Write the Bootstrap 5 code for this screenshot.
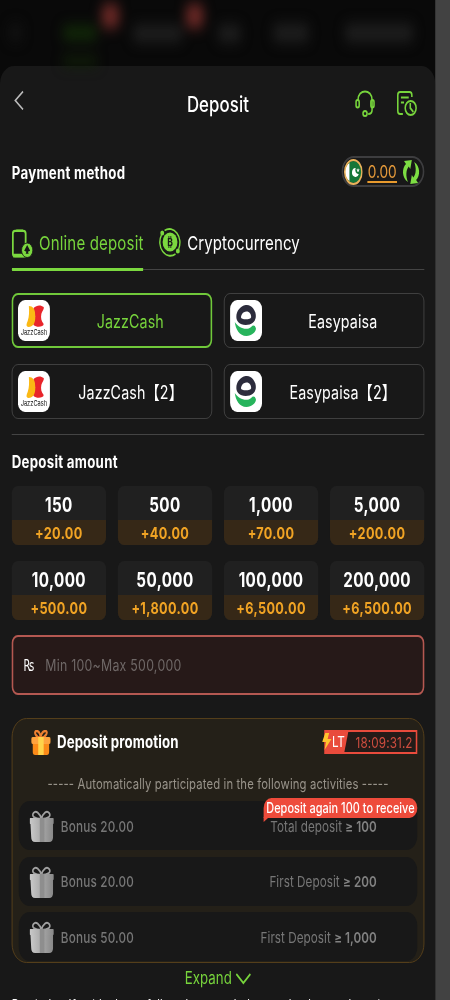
<!DOCTYPE html>
<html lang="en" data-bs-theme="dark">
<head>
<meta charset="utf-8">
<meta name="viewport" content="width=device-width, initial-scale=1">
<title>Deposit</title>
<link href="https://cdn.jsdelivr.net/npm/bootstrap@5.3.0/dist/css/bootstrap.min.css" rel="stylesheet">
<style>
html,body{height:1000px;overflow:hidden}
body{background:#424242;font-family:Inter,"Noto Sans CJK SC",sans-serif;line-height:1;color:#fff;width:450px}
.frame{width:436px;height:1000px;overflow:hidden}
/* the app is laid out 558px wide and condensed horizontally */
.app{width:558px;height:1000px;background:#090909;transform:scaleX(.78);transform-origin:0 0;overflow:hidden;white-space:nowrap}
.backnav{height:66px;position:relative;filter:blur(7px)}
.backnav i{position:absolute;display:block;border-radius:6px;background:#1e1e1e}
.sheet{background:#181818;border-radius:18px 18px 0 0;height:934px;padding:0 14px 0 15px}
.head{height:76px}
.side{width:122px}
.ttl{font-size:21.5px;font-weight:500;letter-spacing:.15px;padding-top:1px}
.grn{color:#77d43c}
.h17{font-size:17px;font-weight:700;letter-spacing:.35px}
.pill{width:106px;height:31px;border:2px solid #3d3d3f;border-radius:16px;padding-left:1px}
.bal{color:#e2983a;font-size:17.5px;border-bottom:2px solid #e89a2d;height:22px;line-height:22px;width:38px}
.tabs{height:54px;border-bottom:1px solid #444;margin-top:29px}
.tabx{height:55px;font-size:19.3px;padding-top:3px;letter-spacing:.2px}
.tabx.on{border-bottom:3px solid #7bd83f;color:#77d43c;border-radius:1px}
.pay{display:grid;grid-template-columns:1fr 1fr;gap:15.5px 15px;margin-top:23px}
.pm{height:55px;border:1px solid #454545;border-radius:8px;padding-left:7px;font-size:18.3px;letter-spacing:.15px}
.pm>span{padding-top:2px}
.pm.on{border:2px solid #70c83a;padding-left:6px;color:#77d43c}
.amts{display:grid;grid-template-columns:repeat(4,1fr);gap:16px 15px;margin-top:15px}
.amt{height:59px;border-radius:8px;overflow:hidden;background:#202020;text-align:center}
.amt b{display:block;height:34px;line-height:38px;font-size:19.5px;font-weight:650;letter-spacing:.5px}
.amt span{display:block;height:25px;line-height:26px;font-size:16.3px;font-weight:650;letter-spacing:.45px;color:#f0a324;background:#362817}
.money{height:60px;border:2px solid #b45851;border-radius:8px;background:#261918;margin-top:15px;font-size:15.8px;letter-spacing:.35px;color:#6f6867;padding-left:13px;padding-top:2px}
.promo{height:245px;border:1px solid #5b431b;border-radius:19px;background:#242018;margin-top:23px;padding:0 8px}
.tmr{width:119px;height:24px;border:2px solid #e94b3c;background:#241b18;color:#cf4d3f;font-size:15px;letter-spacing:.15px;position:relative}
.brow{height:49px;border-radius:14px;background:#181818;color:#777;font-size:15px;font-weight:500;letter-spacing:.25px;margin-bottom:6.5px;padding:1px 52px 0 14px;position:relative}
.cond{font-weight:400;letter-spacing:.05px}.cond b{font-weight:600;color:#828282}
.tip{position:absolute;right:0;top:-3px;width:197px;height:20px;border-radius:10px 10px 10px 0;background:#ee4b3b;color:#fff;font-size:14px;letter-spacing:.05px;line-height:20px;text-align:center}
.tip:after{content:"";position:absolute;left:0;top:19px;border-top:5px solid #ee4b3b;border-right:7px solid transparent}
.auto{font-size:14.5px;letter-spacing:.16px;color:#98938a;margin-top:10px;height:26px;line-height:17px}
.note{font-size:14px;margin-top:11px;height:14px;letter-spacing:.2px}
</style>
</head>
<body>
<svg width="0" height="0" class="position-absolute">
<defs>
<linearGradient id="sil" x1="0" x2="1"><stop offset="0" stop-color="#c9c9c9"/><stop offset="1" stop-color="#888"/></linearGradient>
<symbol id="jazz" viewBox="0 0 41 41"><rect width="41" height="41" rx="9" fill="#fff"/><path d="M20 8c4-3 9-3.500 13-1 1 2-2 4-3 7-1 4 0 7 3 10 0 3-9 4-13 1-1-2 2-5 2-9-1-4-2-6-2-8z" fill="#e8252b"/><path d="M14 6c5 0 8 3 8 8 1 7-1 13-9 13-3-1-2-3-.5-6 2-5 2-9 1.500-15z" fill="#fbb914"/><text x="20.500" y="35" text-anchor="middle" textLength="34" lengthAdjust="spacingAndGlyphs" letter-spacing="0" font-size="7.500" fill="#111">JazzCash</text></symbol>
<symbol id="easy" viewBox="0 0 41 41"><rect width="41" height="41" rx="9" fill="#fff"/><path fill-rule="evenodd" d="M20 5c7-1 13 5 13 11 0 6-6 9-13 9-8 0-12-4-12-8C8 11 13 6 20 5zm1 6.500c-5 0-7 4-7 6 0 2.500 13 2.500 13-.5 0-3-2-5.500-6-5.500z" fill="#2c2c3c"/><path d="M6 22c5 6 15 9 21 5 2-2 5-2 6 1 1 3-5 8-12 8-9 0-14-7-15-14z" fill="#27b45c"/></symbol>
<symbol id="gift" viewBox="0 0 31 32"><path d="M15 9C6 9 2 6 5 3s8 0 10 6c2-6 7-9 10-6s-1 6-10 6z" fill="none" stroke="#a0a0a0" stroke-width="2"/><path d="M1 13h29v14q0 5-5 5H7q-5 0-5-5z" fill="url(#sil)"/><rect y="8" width="31" height="6" rx="1" fill="url(#sil)"/><path d="M13 8h6v24h-6z" fill="#8e8e8e"/></symbol>
</defs>
</svg>
<div class="frame">
<main class="app">
<div class="backnav"><i style="left:12px;top:24px;width:16px;height:17px;background:#131313"></i><i style="left:80px;top:26px;width:45px;height:14px;background:#122a08"></i><i style="left:130px;top:4px;width:23px;height:24px;background:#692825"></i><i style="left:170px;top:25px;width:64px;height:17px"></i><i style="left:238px;top:4px;width:23px;height:24px;background:#692825"></i><i style="left:279px;top:25px;width:30px;height:17px"></i><i style="left:350px;top:24px;width:46px;height:18px"></i><i style="left:442px;top:24px;width:88px;height:18px"></i><i style="left:80px;top:57px;width:45px;height:8px;background:#122408"></i></div>
<section class="sheet">
<header class="head d-flex align-items-center justify-content-between">
<div class="side"><svg class="d-block mb-2" width="20" height="20" viewBox="0 0 20 20"><path d="M14.500 1.500 4.500 10.500l10 9" fill="none" stroke="#bbb" stroke-width="1.700"/></svg></div>
<div class="ttl">Deposit</div>
<div class="side d-flex justify-content-end">
<svg style="margin-right:27px" width="26" height="28" viewBox="2 0 26 28" fill="none" stroke="#77d43c" stroke-width="2"><path d="M6 10C6-1.500 24-1.500 24 10v10q0 4-5 4"/><rect x="3.500" y="10" width="4" height="7.500" rx="2"/><rect x="22.500" y="10" width="4" height="7.500" rx="2"/><circle cx="15" cy="23.500" r="2.600"/></svg>
<svg style="margin-right:9px" width="27" height="28" viewBox="0 0 27 28" fill="none" stroke="#77d43c" stroke-width="2"><path d="M8.500 24H5q-3 0-3-3V5q0-3 3-3h12q3 0 3 3v2M6 7.500h10M6 12.500h4"/><circle cx="18.500" cy="18" r="7"/><path d="M18 13v5l4 4"/></svg>
</div></header>
<div class="d-flex align-items-center justify-content-between" style="margin-top:14px"><span class="h17 pt-1">Payment method</span>
<div class="pill d-flex align-items-center"><svg width="24" height="26" viewBox="0 0 24 26"><circle cx="12" cy="13" r="11" fill="#157638"/><path d="M7 4v18C-1 18-1 8 7 4z" fill="#fff"/><ellipse cx="12" cy="13" rx="11" ry="12" fill="none" stroke="#e9b25c" stroke-width="2"/><path d="M15 9a4.500 4.500 0 1 0 4 6 4 4 0 0 1-4-6zM18 9l.6 1.400 1.600.1-1.200 1 .3 1.500-1.300-.8-1.300.8.3-1.500-1.200-1 1.600-.1z" fill="#fff"/></svg><span class="bal text-center" style="margin:0 6px">0.00</span><svg width="24" height="26" viewBox="0 0 24 26" fill="#7ddd43"><path d="M8 23C0 19 0 9 5.500 5L3 2l10-1-2 9-2-2.500C5.500 11 5 17 8 23zM16 3c8 4 8 14 2.500 18l2.500 3-10 1 2-9 2 2.500C18.500 15 19 9 16 3z"/></svg></div></div>
<nav class="tabs d-flex">
<div class="tabx on d-flex align-items-center" style="width:169px"><svg style="margin-top:-1px" width="28" height="31" viewBox="0 0 28 31"><rect x="1.500" y="2.500" width="17" height="26" rx="3" fill="none" stroke="#7bd83f" stroke-width="2.400"/><path d="M2 26h17v4H2zM6 1h9v2H6z" fill="#7bd83f"/><circle cx="20.500" cy="22.500" r="7.500" fill="#7bd83f" stroke="#181818"/><path d="m20.500 17 4 6-3 1 1 2h-4l1-2-3-1z" fill="#181818"/></svg><span class="ms-2">Online deposit</span></div>
<div class="tabx d-flex align-items-center" style="margin-left:19px;padding-bottom:3px;letter-spacing:.1px"><svg style="margin-top:-3px" width="30" height="30" viewBox="0 0 30 30"><g fill="none" stroke="#7bd83f" stroke-width="1.800"><path d="M8 3.500A13.500 13.500 0 0 1 26 22M22 27A13.500 13.500 0 0 1 4 8"/></g><circle cx="15" cy="15" r="9.500" fill="#7bd83f"/><circle cx="5" cy="6" r="2.500" fill="#7bd83f"/><circle cx="25" cy="24" r="2.500" fill="#7bd83f"/><path d="M13.500 9v2.500M16 9v2.500M13.500 18.500V21M16 18.500V21" stroke="#181818"/><text x="15" y="19" text-anchor="middle" font-size="11" font-weight="700" fill="#181818">B</text></svg><span style="margin-left:7px">Cryptocurrency</span></div>
</nav>
<div class="pay">
<div class="pm on d-flex align-items-center"><svg width="41" height="41"><use href="#jazz"/></svg><span class="flex-fill text-center">JazzCash</span></div>
<div class="pm d-flex align-items-center"><svg width="41" height="41"><use href="#easy"/></svg><span class="flex-fill text-center">Easypaisa</span></div>
<div class="pm d-flex align-items-center"><svg width="41" height="41"><use href="#jazz"/></svg><span class="flex-fill text-center">JazzCash【2】</span></div>
<div class="pm d-flex align-items-center"><svg width="41" height="41"><use href="#easy"/></svg><span class="flex-fill text-center">Easypaisa【2】</span></div>
</div>
<div class="border-bottom" style="margin-top:15.5px;border-color:#444!important"></div>
<div class="h17" style="margin-top:19px">Deposit amount</div>
<div class="amts">
<div class="amt"><b>150</b><span>+20.00</span></div><div class="amt"><b>500</b><span>+40.00</span></div><div class="amt"><b>1,000</b><span>+70.00</span></div><div class="amt"><b>5,000</b><span>+200.00</span></div>
<div class="amt"><b>10,000</b><span>+500.00</span></div><div class="amt"><b>50,000</b><span>+1,800.00</span></div><div class="amt"><b>100,000</b><span>+6,500.00</span></div><div class="amt"><b>200,000</b><span>+6,500.00</span></div>
</div>
<div class="money d-flex align-items-center"><span class="text-white" style="width:28px;font-family:'DejaVu Sans';font-size:16px"><span class="d-inline-block" style="transform:scaleX(.8);transform-origin:0 0">₨</span></span>Min 100~Max 500,000</div>
<div class="promo">
<div class="d-flex align-items-center justify-content-between" style="height:46px"><div class="d-flex align-items-center h17" style="letter-spacing:.15px"><svg class="me-2" style="margin-left:16px" width="25" height="25" viewBox="0 0 25 25"><path d="M12 8C5 7 3 1 7 1s5 5 5 7c0-2 2-7 6-7s2 6-6 7z" fill="none" stroke="#ee8031" stroke-width="2.400"/><rect x="2" y="11" width="21" height="14" rx="3" fill="#fb8a18"/><rect y="7" width="25" height="7" rx="2" fill="#ffa33e"/><path d="M9 7h7v18H9z" fill="#ffd34a"/></svg>Deposit promotion</div>
<div class="tmr d-flex align-items-center justify-content-end pe-1"><svg class="position-absolute" style="left:-5px;top:-2px" width="40" height="24" viewBox="0 0 40 24"><path d="M3 0h31l-6 24H3z" fill="#e94b3c"/><path d="M4 3h5L7 9h5L3 20l2-8H0z" fill="#ffc42d"/><text x="12.500" y="17.500" font-size="15" letter-spacing="0" fill="#fff">LT</text></svg>18:09:31.2</div></div>
<div class="text-center auto">----- Automatically participated in the following activities -----</div>
<div class="brow d-flex align-items-center"><svg style="margin-right:9px" width="31" height="32"><use href="#gift"/></svg>Bonus 20.00<span class="ms-auto cond">Total deposit <b>≥ 100</b></span><div class="tip">Deposit again 100 to receive</div></div>
<div class="brow d-flex align-items-center"><svg style="margin-right:9px" width="31" height="32"><use href="#gift"/></svg>Bonus 20.00<span class="ms-auto cond">First Deposit <b>≥ 200</b></span></div>
<div class="brow d-flex align-items-center"><svg style="margin-right:9px" width="31" height="32"><use href="#gift"/></svg>Bonus 50.00<span class="ms-auto cond">First Deposit <b>≥ 1,000</b></span></div>
</div>
<div class="grn text-center" style="font-size:17px;margin-top:7px;letter-spacing:.1px">Expand <svg width="20" height="12" viewBox="0 0 20 12"><path d="m1 1 9 9 9-9" fill="none" stroke="#77d43c" stroke-width="2"/></svg></div>
<div class="note">Reminder: If paid, please follow the steps below to check your deposit</div>
</section>
</main>
</div>
<script src="https://cdn.jsdelivr.net/npm/bootstrap@5.3.0/dist/js/bootstrap.bundle.min.js"></script>
</body>
</html>
